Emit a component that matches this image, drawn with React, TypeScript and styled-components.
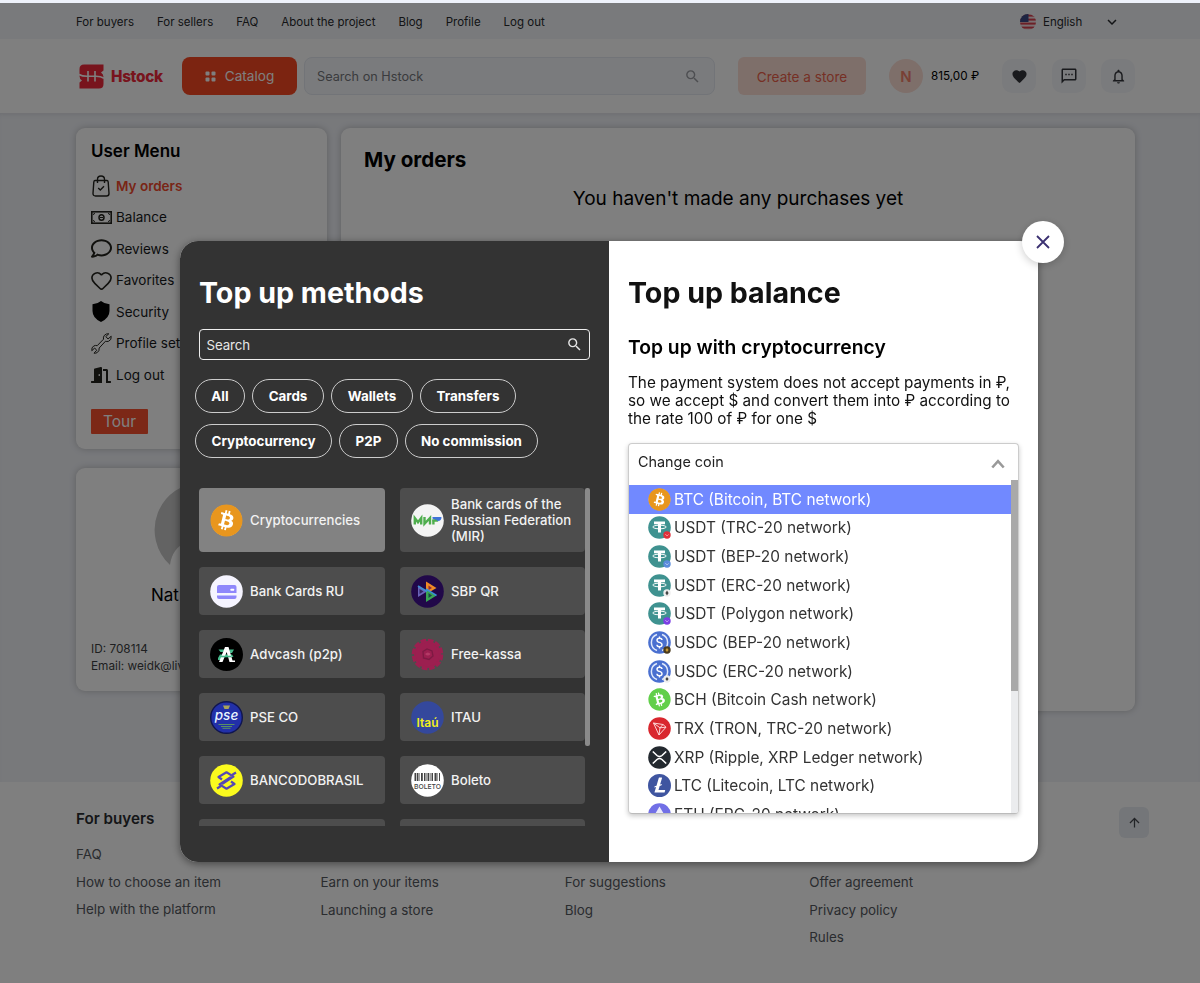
import React from "react";
import styled, { createGlobalStyle } from "styled-components";
import { FaBitcoin, FaRegComment, FaDoorOpen } from "react-icons/fa";
import { Heart } from "lucide-react";
import {
  MdSearch,
  MdFavorite,
  MdOutlineSms,
  MdNotificationsNone,
  MdKeyboardArrowDown,
  MdArrowUpward,
} from "react-icons/md";
import { SiLitecoin } from "react-icons/si";

const GlobalStyle = createGlobalStyle`
  * { box-sizing: border-box; }
  body {
    margin: 0;
    font-family: Inter, "Liberation Sans", sans-serif;
    color: #000;
    background: #fff;
    overflow: hidden;
  }
  h1, h2, h3, p, ul { margin: 0; padding: 0; }
  ul { list-style: none; }
  button { font-family: inherit; border: 0; padding: 0; margin: 0; }
  svg { display: block; flex: none; }
`;

/* ---------- page ---------- */

const Page = styled.div`
  height: 983px;
  display: flex;
  flex-direction: column;
  border-top: 3px solid #eef2fb;
  overflow: hidden;
`;

const TopBar = styled.nav`
  height: 36px;
  flex: none;
  display: flex;
  align-items: center;
  gap: 23px;
  padding: 1px 79px 0 76px;
  background: #f3f5f8;
  font-size: 11.5px;
  color: #26282c;
`;

const TopLink = styled.a`
  white-space: nowrap;
`;

const Language = styled.div`
  margin-left: auto;
  width: 101px;
  display: flex;
  align-items: center;
  gap: 7px;

  svg:last-child {
    margin-left: auto;
  }
`;

const Header = styled.header`
  height: 74px;
  flex: none;
  display: flex;
  align-items: center;
  padding: 0 65px 0 79px;
  background: #fff;
`;

const Logo = styled.div`
  width: 103px;
  display: flex;
  align-items: center;
  gap: 7px;
  color: #f0283a;
  font-size: 15.3px;
  font-weight: 800;
  letter-spacing: -0.3px;
`;

const CatalogButton = styled.button`
  width: 115px;
  height: 38px;
  border-radius: 8px;
  background: #f94822;
  color: #fff;
  font-size: 13.6px;
  display: flex;
  align-items: center;
  justify-content: center;
  gap: 9px;
`;

const SiteSearch = styled.div`
  width: 411px;
  height: 38px;
  margin-left: 7px;
  padding: 0 13px 0 12px;
  border: 1px solid #e4e8f0;
  border-radius: 8px;
  background: #f5f7fb;
  color: #75777c;
  font-size: 12.7px;
  display: flex;
  align-items: center;
  justify-content: space-between;
`;

const StoreButton = styled.button`
  width: 128px;
  height: 38px;
  margin-left: 23px;
  padding-top: 1px;
  border-radius: 6px;
  background: #fcded5;
  color: #ec5f4a;
  font-size: 13.6px;
`;

const Avatar = styled.div`
  width: 34px;
  height: 34px;
  margin-left: 23px;
  border-radius: 50%;
  background: #fcded5;
  color: #f2806a;
  font-size: 15px;
  font-weight: 600;
  display: flex;
  align-items: center;
  justify-content: center;
`;

const Amount = styled.span`
  width: 79px;
  padding-left: 8px;
  font-size: 11.7px;
  white-space: nowrap;
`;

const RoundTools = styled.div`
  display: flex;
  gap: 15.5px;
`;

const ToolButton = styled.button`
  width: 34px;
  height: 34px;
  border-radius: 10px;
  background: #f5f6fa;
  color: #33353a;
  display: flex;
  align-items: center;
  justify-content: center;
`;

const Main = styled.main`
  height: 669px;
  flex: none;
  display: flex;
  align-items: flex-start;
  gap: 14px;
  padding: 15px 65px 0 76px;
  background: #f0f2f7;
  box-shadow: inset 0 4px 5px -3px rgba(60, 60, 70, 0.12);
`;

const Sidebar = styled.aside`
  width: 251px;
  flex: none;
  display: flex;
  flex-direction: column;
  gap: 19px;
`;

const Card = styled.section`
  border-radius: 9px;
  background: #fff;
  box-shadow: 0 0 7px rgba(0, 0, 0, 0.22);
`;

const MenuCard = styled(Card)`
  height: 321px;
  padding: 11px 15px 0;
`;

const MenuTitle = styled.h3`
  font-size: 17px;
  line-height: 24px;
  font-weight: 600;
`;

const MenuList = styled.ul`
  margin-top: 7px;
`;

const MenuItem = styled.li<{ $active?: boolean }>`
  height: 31.5px;
  display: flex;
  align-items: center;
  gap: 5px;
  font-size: 13.5px;
  font-weight: ${(p) => (p.$active ? 600 : 400)};
  color: ${(p) => (p.$active ? "#f24a2c" : "#16181a")};
  white-space: nowrap;
`;

const MenuIcon = styled.span`
  width: 20px;
  display: flex;
  justify-content: center;
  color: #22221c;
`;

const TourButton = styled.button`
  width: 57px;
  height: 25px;
  margin-top: 18px;
  border-radius: 1px;
  background: #f8502e;
  color: #fff;
  font-size: 15.5px;
`;

const ProfileCard = styled(Card)`
  height: 223px;
  padding: 14px 15px 0;
  font-size: 11.8px;
  line-height: 17.4px;
  color: #3c3e42;
`;

const ProfilePhoto = styled.div`
  display: flex;
  justify-content: center;
`;

const ProfileName = styled.div`
  margin: 2px 0 31px 60px;
  font-size: 17px;
  line-height: 30px;
  color: #000;
`;

const OrdersCard = styled(Card)`
  width: 794px;
  height: 583px;
  padding: 18px 23px;
`;

const OrdersTitle = styled.h2`
  font-size: 20.6px;
  line-height: 28px;
  font-weight: 700;
`;

const OrdersEmpty = styled.p`
  margin-top: 12px;
  text-align: center;
  font-size: 19px;
  line-height: 26px;
`;

const Footer = styled.footer`
  flex: 1;
  display: flex;
  padding: 25px 51px 0 76px;
  background: #fff;
`;

const FooterColumn = styled.div<{ $offset?: boolean }>`
  width: 244.4px;
  padding-top: ${(p) => (p.$offset ? "62px" : "0")};
  font-size: 13.4px;
  line-height: 27.7px;
  color: #54585e;
`;

const FooterHeading = styled.h3`
  margin-bottom: 10px;
  font-size: 15.2px;
  line-height: 24px;
  font-weight: 600;
  color: #2a2c30;
`;

const UpButton = styled.button`
  width: 30px;
  height: 31px;
  margin-left: auto;
  border-radius: 6px;
  background: #e9edf2;
  color: #44484e;
  display: flex;
  align-items: center;
  justify-content: center;
`;

/* ---------- dialog ---------- */

const Overlay = styled.div`
  position: fixed;
  inset: 3px 0 0 0;
  padding: 238px 0 0 180px;
  background: rgba(0, 0, 0, 0.5);
`;

const Dialog = styled.div`
  position: relative;
  width: 858px;
  height: 621px;
  display: flex;
  border-radius: 18px;
  background: #fff;
  box-shadow: 0 2px 8px rgba(0, 0, 0, 0.45);
`;

const CloseButton = styled.button`
  position: absolute;
  top: -20.5px;
  right: -26px;
  width: 42px;
  height: 42px;
  border-radius: 50%;
  background: #fff;
  box-shadow: 0 2px 8px rgba(0, 0, 0, 0.2);
  display: flex;
  align-items: center;
  justify-content: center;
`;

const MethodsPane = styled.div`
  width: 429px;
  padding: 34px 19px 0;
  border-radius: 18px 0 0 18px;
  background: #333;
  color: #fff;
`;

const BalancePane = styled.div`
  width: 429px;
  padding: 34px 19px 0;
`;

const PaneTitle = styled.h1<{ $dark?: boolean }>`
  font-size: 28.6px;
  line-height: 36px;
  font-weight: 700;
  white-space: nowrap;
  color: ${(p) => (p.$dark ? "#111" : "#fff")};
`;

const MethodSearch = styled.div`
  height: 31px;
  margin-top: 18px;
  padding: 0 6px 0 6.5px;
  border: 1px solid #eee;
  border-radius: 4px;
  font-size: 13.3px;
  letter-spacing: -0.1px;
  display: flex;
  align-items: center;
  justify-content: space-between;
  color: #e6e6e6;
`;

const Chips = styled.div`
  margin: 19px -4px 0;
  display: flex;
  flex-wrap: wrap;
  gap: 11px 7px;
`;

const Chip = styled.button<{ $width: number }>`
  width: ${(p) => p.$width}px;
  height: 34px;
  border: 1px solid #ccc;
  border-radius: 17px;
  background: transparent;
  color: #fff;
  font-size: 13.4px;
  font-weight: 700;
  white-space: nowrap;
`;

const MethodArea = styled.div`
  height: 338px;
  margin-top: 30px;
  display: flex;
  overflow: hidden;
`;

const MethodGrid = styled.div`
  width: 386px;
  display: grid;
  grid-template-columns: 186px 185px;
  grid-template-rows: 64px;
  grid-auto-rows: 48px;
  gap: 15px;
`;

const MethodCard = styled.button<{ $active?: boolean }>`
  display: flex;
  align-items: center;
  gap: 7px;
  padding: 0 6px 0 11px;
  border-radius: 4px;
  background: ${(p) => (p.$active ? "#828282" : "#4d4d4d")};
  color: #f2f2f2;
  font-size: 13.2px;
  line-height: 16px;
  font-weight: 500;
  text-align: left;
`;

const ScrollThumb = styled.div<{ $w: number; $h: number; $c: string }>`
  width: ${(p) => p.$w}px;
  height: ${(p) => p.$h}px;
  border-radius: ${(p) => (p.$w < 6 ? 2 : 0)}px;
  background: ${(p) => p.$c};
`;

const SubTitle = styled.h2`
  margin-top: 23px;
  font-size: 19.3px;
  line-height: 26px;
  font-weight: 600;
  white-space: nowrap;
`;

const Note = styled.p`
  margin-top: 14px;
  font-size: 15.28px;
  line-height: 18px;
  white-space: nowrap;
  color: #111;
`;

const CoinSelect = styled.div`
  width: 391px;
  height: 371px;
  margin-top: 15px;
  border: 1px solid #ccc;
  border-bottom-color: #bbb;
  border-radius: 4px;
  overflow: hidden;
  box-shadow: 0 2px 5px rgba(0, 0, 0, 0.22);
`;

const SelectHead = styled.div`
  height: 36px;
  padding: 0 13px 1px 9px;
  display: flex;
  align-items: center;
  justify-content: space-between;
  font-size: 14.4px;
  color: #222;

  svg {
    margin-top: 5px;
  }
`;

const SelectBody = styled.div`
  display: flex;
  height: 333px;
  overflow: hidden;
`;

const CoinList = styled.ul`
  width: 383px;
  padding-top: 5px;
`;

const CoinRow = styled.li<{ $active?: boolean }>`
  height: 28.65px;
  padding-left: 19px;
  display: flex;
  align-items: center;
  gap: 3px;
  font-size: 15.4px;
  white-space: nowrap;
  background: ${(p) => (p.$active ? "#7189ff" : "transparent")};
  color: ${(p) => (p.$active ? "#fff" : "#333")};
`;

const ScrollTrack = styled.div`
  width: 7px;
  background: #ebecee;
`;

/* ---------- drawings ---------- */

const Flag = () => (
  <svg width="16" height="16" viewBox="0 0 16 16">
    <clipPath id="flag">
      <circle cx="8" cy="8" r="8" />
    </clipPath>
    <g clipPath="url(#flag)">
      <rect width="16" height="16" fill="#f3dfe2" />
      {[0, 4, 8, 12].map((y) => (
        <rect key={y} y={y + 0.6} width="16" height="2" fill="#d8404e" />
      ))}
      <rect width="8.5" height="8" fill="#3c4a86" />
    </g>
  </svg>
);

const LogoMark = () => (
  <svg width="25" height="25" viewBox="0 0 25 25">
    <path
      fill="#f0283a"
      d="M5 0.5H24.5V6.5L22 8.500Q24.500 10 24.500 13V20Q24.500 24.500 20 24.500H0.500V18.500L3 16.500Q0.500 15 0.500 12V5Q0.500 0.500 5 0.500Z"
    />
    <g fill="none" stroke="#fff" strokeWidth="1.600">
      <path d="M0 10.500Q3 12.300 8 12.300H17Q22 12.300 25 14.300M9 7V17.500M16 7V17.500" />
    </g>
  </svg>
);

const CatalogDots = () => (
  <svg width="11" height="11" viewBox="0 0 11 11" fill="#fff">
    <rect x="0.500" y="0.500" width="4" height="4" rx="1" />
    <rect x="6.500" y="0.500" width="4" height="4" rx="1" />
    <rect x="0.500" y="6.500" width="4" height="4" rx="1" />
    <rect x="6.500" y="6.500" width="4" height="4" rx="1" />
  </svg>
);

const BagIcon = () => (
  <svg width="18" height="22" viewBox="0 0 18 22" fill="none" stroke="currentColor" strokeWidth="1.400">
    <path d="M3 5.500H15Q16 5.500 16.200 7L17 18.500Q17 21 14.500 21H3.500Q1 21 1 18.500L1.800 7Q2 5.500 3 5.500Z" />
    <path d="M5.500 8V4.500Q5.500 1 9 1T12.500 4.500V8" />
    <path d="M6.200 13L8.300 15L12 11.300" />
  </svg>
);

const CashIcon = () => (
  <svg width="21" height="13" viewBox="0 0 21 13" fill="none" stroke="currentColor">
    <rect x="0.800" y="0.800" width="19.400" height="11.400" strokeWidth="1.600" />
    <path d="M2 3.500Q3.500 3.500 3.500 2M17.500 2Q17.500 3.500 19 3.500M2 9.500Q3.500 9.500 3.500 11M17.500 11Q17.500 9.500 19 9.500" strokeWidth="1" />
    <ellipse cx="10.500" cy="6.500" rx="2.500" ry="2.800" strokeWidth="1.500" />
    <path d="M9 6.500H12" strokeWidth="1" />
  </svg>
);

const ShieldIcon = () => (
  <svg width="18" height="21" viewBox="0 0 18 21" fill="#000">
    <path d="M9 0Q12.500 3 17.500 3.300V10Q17.500 17 9 21Q0.500 17 0.500 10V3.300Q5.500 3 9 0Z" />
  </svg>
);

const WrenchIcon = () => (
  <svg width="21" height="21" viewBox="0 0 21 21" fill="none" stroke="currentColor" strokeWidth="1">
    <path d="M17.800 0.800L14.800 3.500L17 6L20.200 3.200Q20.800 7 17.500 8.300Q15.800 8.800 14.500 8.200L8.200 15Q8.500 18 6.300 19.500Q4.800 20.500 3 20.200L5.700 17.300L3.700 15L0.800 17.700Q0.300 14.500 2.700 13Q4.300 12 6.200 12.700L12.500 6.200Q11.900 4 13.500 2.200Q15.300 0.400 17.800 0.800Z" />
  </svg>
);

const PhotoPlaceholder = () => (
  <svg width="96" height="96" viewBox="0 0 96 96">
    <path d="M48 0.500A47.500 47.500 0 0 0 16 83Q18 66 34 59Q48 54 62 59Q78 66 80 83A47.500 47.500 0 0 0 48 0.500Z" fill="#c6c6c6" />
  </svg>
);

const CloseIcon = () => (
  <svg width="14" height="14" viewBox="0 0 14 14" fill="none" stroke="#3b3171" strokeWidth="1.800">
    <path d="M1 1L13 13M13 1L1 13" />
  </svg>
);

const ChevronUp = () => (
  <svg width="14" height="10" viewBox="0 0 14 10" fill="none" stroke="#999" strokeWidth="2.600">
    <path d="M1.300 8.500L7 2.200L12.700 8.500" />
  </svg>
);

const BitcoinDisc = ({ size, color, tilt = 0 }: { size: number; color: string; tilt?: number }) => (
  <svg width={size} height={size} viewBox="0 0 32 32">
    <circle cx="16" cy="16" r="15" fill="#fff" />
    <g transform={`rotate(${tilt} 16 16)`}>
      <FaBitcoin x="0" y="0" size={32} color={color} />
    </g>
  </svg>
);

const discText = { fontFamily: "Inter, sans-serif", textAnchor: "middle" as const };

const MirDisc = () => (
  <svg width="33" height="33" viewBox="0 0 33 33">
    <circle cx="16.500" cy="16.500" r="16.300" fill="#f4f4f4" />
    <g fill="none" stroke="#4fae4e" strokeWidth="2.400">
      <path d="M3.800 20.500V14L7 18.300L10.200 14V20.500" />
      <path d="M13.500 13V19.800L19 14V20.500" />
      <path d="M22.400 20.500V15.500" />
    </g>
    <path d="M21.500 13H30.500Q30.500 16.800 27 17H25.500L21.500 14.500Z" fill="#3f73d8" />
    <path d="M21.500 15.500H25L27.500 17.800H21.500Z" fill="#4fae4e" />
  </svg>
);

const CardDisc = () => (
  <svg width="33" height="33" viewBox="0 0 33 33">
    <circle cx="16.500" cy="16.500" r="16.300" fill="#f5f4ff" />
    <path d="M9 10H24.500Q26.500 10 26.500 12V18H7V12Q7 10 9 10Z" fill="#8f87fb" />
    <path d="M7 20.500H26.500V22Q26.500 24 24.500 24H9Q7 24 7 22Z" fill="#8f87fb" />
    <rect x="20.500" y="13.700" width="3.600" height="2" rx="0.500" fill="#fff" />
  </svg>
);

const SbpDisc = () => (
  <svg width="33" height="33" viewBox="0 0 33 33">
    <circle cx="16.500" cy="16.500" r="16.300" fill="#210849" />
    <path d="M7 11L16 16.500L7 22Z" fill="#6a62b8" />
    <path d="M8.500 14L12.500 16.500L8.500 19Z" fill="#2f2460" />
    <path d="M15 6.500L25.500 13L15 19Z" fill="#f08a24" />
    <path d="M17.500 10.500L21 13L17.500 15Z" fill="#8c2b3e" />
    <path d="M15 14L25.500 20.500L15 27Z" fill="#3aa655" />
    <path d="M17.500 18L21 20.500L17.500 23Z" fill="#1b4a48" />
    <path d="M15 14L20.500 17.300L25.500 20.500" stroke="#3a8fd8" strokeWidth="1.500" fill="none" />
    <path d="M7 11L16 16.500" stroke="#3e8fd0" strokeWidth="1.800" />
  </svg>
);

const AdvDisc = () => (
  <svg width="33" height="33" viewBox="0 0 33 33">
    <circle cx="16.500" cy="16.500" r="16.500" fill="#000" />
    <path d="M8.500 11.500H15L13 14H10.500ZM19.500 11.500H24L22 15H18.500ZM8 20L10 16.500H22L23.500 19H12L11 22H8Z" fill="#45b98b" />
    <path d="M9 24L15 9H18.500L22.500 22.500H25V24H19.500L16.700 14L12.500 24Z" fill="#fff" />
    <path d="M11 18.500H21" stroke="#45b98b" strokeWidth="1.600" />
  </svg>
);

const KassaDisc = () => (
  <svg width="33" height="33" viewBox="0 0 33 33">
    <circle cx="16.500" cy="16.500" r="13.500" fill="#9c1f50" />
    <circle cx="16.500" cy="16.500" r="13.800" fill="none" stroke="#9c1f50" strokeWidth="4" strokeDasharray="5.500 1.720" />
    <path
      d="M12 13.500L16 11L21 13L22 18L18 21.500L12.500 20Z"
      fill="none"
      stroke="#7d1a43"
      strokeWidth="1.300"
    />
    <path d="M14 16Q17 13 19.500 16Q17 19 14 16Z" fill="#b43a66" />
  </svg>
);

const PseDisc = () => (
  <svg width="33" height="33" viewBox="0 0 33 33">
    <circle cx="16.500" cy="16.500" r="15.800" fill="#2230a8" stroke="#10154f" strokeWidth="1.400" />
    <path d="M13 4.500H20L18.500 8H14.500Z" fill="#a9a35a" />
    <text x="16.500" y="19" fontSize="13.500" fontStyle="italic" fontWeight="500" fill="#eaf6ff" {...discText}>
      pse
    </text>
    <path d="M8.500 23.500H24.500M11 25.500H22M12.500 27.300H20.500" stroke="#5f9a5e" strokeWidth="0.900" />
  </svg>
);

const ItauDisc = () => (
  <svg width="33" height="33" viewBox="0 0 33 33">
    <circle cx="16.500" cy="16.500" r="16.300" fill="#34489c" />
    <text x="16.500" y="26" fontSize="12" fontWeight="600" fill="#f3f01c" {...discText}>
      Itaú
    </text>
  </svg>
);

const BrasilDisc = () => (
  <svg width="33" height="33" viewBox="0 0 33 33">
    <circle cx="16.500" cy="16.500" r="16.300" fill="#fbfb1e" />
    <g fill="none" stroke="#5648b4" strokeWidth="2.200" strokeLinejoin="round">
      <path d="M12 15.500L8.500 13L16.500 8.300L23.500 12.600L12 20" />
      <path d="M21 17.500L24.500 20L16.500 24.700L9.500 20.400L21 13" />
      <path d="M22 11L26 8.500M11 22L7 24.500" />
    </g>
  </svg>
);

const BoletoDisc = () => (
  <svg width="33" height="33" viewBox="0 0 33 33">
    <circle cx="16.500" cy="16.500" r="16.300" fill="#fff" />
    {[3.5, 6, 7.5, 10, 13, 14.5, 16.5, 19.5, 21, 23.5, 25.5, 28].map((x, i) => (
      <rect key={x} x={x} y="9" width={i % 3 === 0 ? 1.8 : 1} height="8" fill="#444" />
    ))}
    <text x="16.500" y="24.500" fontSize="6.800" fontWeight="500" fill="#444" {...discText}>
      BOLETO
    </text>
  </svg>
);

const TetherDisc = ({ badge }: { badge: string }) => (
  <svg width="23" height="23" viewBox="0 0 23 23">
    <circle cx="11.500" cy="11.500" r="11.300" fill="#3f9290" />
    <path d="M6 5.500H17V8.300H13V16.500H10V8.300H6Z" fill="#fff" />
    <ellipse cx="11.500" cy="11" rx="6.700" ry="1.800" fill="none" stroke="#fff" strokeWidth="1" />
    <circle cx="19" cy="19" r="3.700" fill={badge} />
    {badge === "#eeeeee" && <path d="M19 16.500L20.600 19L19 21.500L17.400 19Z" fill="#444" />}
    {badge !== "#eeeeee" && <path d="M17.300 18L19 20L20.700 18.400" stroke="#fff" strokeOpacity="0.450" fill="none" />}
  </svg>
);

const UsdcDisc = ({ badge }: { badge: string }) => (
  <svg width="23" height="23" viewBox="0 0 23 23">
    <circle cx="11.500" cy="11.500" r="11.300" fill="#4a70d0" />
    <path
      d="M9 3.500A8.500 8.500 0 0 0 9 19.500M14 3.500A8.500 8.500 0 0 1 14 19.500"
      fill="none"
      stroke="#dfe8fb"
      strokeWidth="1.500"
    />
    <path
      d="M14 9Q14 7.200 11.500 7.200T9 9.200Q9 10.800 11.500 11.400T14 13.800Q14 15.700 11.500 15.700T9 13.800M11.500 5.500V7.200M11.500 15.700V17.500"
      fill="none"
      stroke="#fff"
      strokeWidth="1.400"
    />
    <circle cx="19" cy="19" r="3.700" fill={badge} />
    <path
      d="M19 17L20.600 19L19 21L17.400 19Z"
      fill={badge === "#eeeeee" ? "#444" : "#c79a34"}
    />
  </svg>
);

const TronDisc = () => (
  <svg width="23" height="23" viewBox="0 0 23 23">
    <circle cx="11.500" cy="11.500" r="11.300" fill="#d9272e" />
    <g fill="none" stroke="#ffe4e4" strokeWidth="0.900" strokeLinejoin="round">
      <path d="M5.500 6L15 7.500L18 10.200L11 18Z" />
      <path d="M5.500 6L12 10.800L18 10.200M12 10.800L15 7.500M12 10.800L11 18" />
    </g>
  </svg>
);

const XrpDisc = () => (
  <svg width="23" height="23" viewBox="0 0 23 23">
    <circle cx="11.500" cy="11.500" r="11.300" fill="#23292f" />
    <path
      d="M4.800 5.500L9 9.500Q11.500 11.500 14 9.500L18.200 5.500M4.800 17.500L9 13.500Q11.500 11.500 14 13.500L18.200 17.500"
      fill="none"
      stroke="#fff"
      strokeWidth="1.600"
    />
  </svg>
);

const LitecoinDisc = () => (
  <svg width="23" height="23" viewBox="0 0 23 23">
    <circle cx="11.500" cy="11.500" r="10.500" fill="#fff" />
    <SiLitecoin x="0" y="0" size={23} color="#3f55a0" />
  </svg>
);

const EthDisc = () => (
  <svg width="23" height="23" viewBox="0 0 23 23">
    <circle cx="11.500" cy="11.500" r="11.300" fill="#716fe6" />
    <path d="M11.500 3.500L16.500 12L11.500 15L6.500 12Z" fill="#fff" fillOpacity="0.850" />
    <path d="M11.500 16.500L16 13.500L11.500 20L7 13.500Z" fill="#fff" />
  </svg>
);

/* ---------- data ---------- */

const topLinks = ["For buyers", "For sellers", "FAQ", "About the project", "Blog", "Profile", "Log out"];

const menu = [
  { label: "My orders", icon: <BagIcon />, active: true },
  { label: "Balance", icon: <CashIcon /> },
  { label: "Reviews", icon: <FaRegComment size={21} /> },
  { label: "Favorites", icon: <Heart size={23} strokeWidth={1.7} /> },
  { label: "Security", icon: <ShieldIcon /> },
  { label: "Profile settings", icon: <WrenchIcon /> },
  { label: "Log out", icon: <FaDoorOpen size={20} /> },
];

const chips: [string, number][] = [
  ["All", 50],
  ["Cards", 72],
  ["Wallets", 82],
  ["Transfers", 96],
  ["Cryptocurrency", 137],
  ["P2P", 59],
  ["No commission", 133],
];

const methods = [
  { label: "Cryptocurrencies", icon: <BitcoinDisc size={33} color="#e8961e" />, active: true },
  { label: "Bank cards of the Russian Federation (MIR)", icon: <MirDisc /> },
  { label: "Bank Cards RU", icon: <CardDisc /> },
  { label: "SBP QR", icon: <SbpDisc /> },
  { label: "Advcash (p2p)", icon: <AdvDisc /> },
  { label: "Free-kassa", icon: <KassaDisc /> },
  { label: "PSE CO", icon: <PseDisc /> },
  { label: "ITAU", icon: <ItauDisc /> },
  { label: "BANCODOBRASIL", icon: <BrasilDisc /> },
  { label: "Boleto", icon: <BoletoDisc /> },
  { label: "", icon: null },
  { label: "", icon: null },
];

const coins = [
  { label: "BTC (Bitcoin, BTC network)", icon: <BitcoinDisc size={23} color="#e8961e" />, active: true },
  { label: "USDT (TRC-20 network)", icon: <TetherDisc badge="#e0303a" /> },
  { label: "USDT (BEP-20 network)", icon: <TetherDisc badge="#5a8bdc" /> },
  { label: "USDT (ERC-20 network)", icon: <TetherDisc badge="#eeeeee" /> },
  { label: "USDT (Polygon network)", icon: <TetherDisc badge="#7b3fe4" /> },
  { label: "USDC (BEP-20 network)", icon: <UsdcDisc badge="#4a3a1c" /> },
  { label: "USDC (ERC-20 network)", icon: <UsdcDisc badge="#eeeeee" /> },
  { label: "BCH (Bitcoin Cash network)", icon: <BitcoinDisc size={23} color="#62cf4a" tilt={-28} /> },
  { label: "TRX (TRON, TRC-20 network)", icon: <TronDisc /> },
  { label: "XRP (Ripple, XRP Ledger network)", icon: <XrpDisc /> },
  { label: "LTC (Litecoin, LTC network)", icon: <LitecoinDisc /> },
  { label: "ETH (ERC-20 network)", icon: <EthDisc /> },
];

export default function App() {
  return (
    <>
      <GlobalStyle />
      <Page>
        <TopBar>
          {topLinks.map((label) => (
            <TopLink key={label}>{label}</TopLink>
          ))}
          <Language>
            <Flag />
            <span>English</span>
            <MdKeyboardArrowDown size={18} />
          </Language>
        </TopBar>

        <Header>
          <Logo>
            <LogoMark />
            Hstock
          </Logo>
          <CatalogButton>
            <CatalogDots />
            Catalog
          </CatalogButton>
          <SiteSearch>
            Search on Hstock
            <MdSearch size={17} color="#9a9ca2" />
          </SiteSearch>
          <StoreButton>Create a store</StoreButton>
          <Avatar>N</Avatar>
          <Amount>815,00 ₽</Amount>
          <RoundTools>
            <ToolButton>
              <MdFavorite size={17} />
            </ToolButton>
            <ToolButton>
              <MdOutlineSms size={18} />
            </ToolButton>
            <ToolButton>
              <MdNotificationsNone size={17} />
            </ToolButton>
          </RoundTools>
        </Header>

        <Main>
          <Sidebar>
            <MenuCard>
              <MenuTitle>User Menu</MenuTitle>
              <MenuList>
                {menu.map((item) => (
                  <MenuItem key={item.label} $active={item.active}>
                    <MenuIcon>{item.icon}</MenuIcon>
                    {item.label}
                  </MenuItem>
                ))}
              </MenuList>
              <TourButton>Tour</TourButton>
            </MenuCard>
            <ProfileCard>
              <ProfilePhoto>
                <PhotoPlaceholder />
              </ProfilePhoto>
              <ProfileName>Nat</ProfileName>
              <div>ID: 708114</div>
              <div>Email: weidk@liv</div>
            </ProfileCard>
          </Sidebar>
          <OrdersCard>
            <OrdersTitle>My orders</OrdersTitle>
            <OrdersEmpty>You haven't made any purchases yet</OrdersEmpty>
          </OrdersCard>
        </Main>

        <Footer>
          <FooterColumn>
            <FooterHeading>For buyers</FooterHeading>
            <div>FAQ</div>
            <div>How to choose an item</div>
            <div>Help with the platform</div>
          </FooterColumn>
          <FooterColumn $offset>
            <div>Earn on your items</div>
            <div>Launching a store</div>
          </FooterColumn>
          <FooterColumn $offset>
            <div>For suggestions</div>
            <div>Blog</div>
          </FooterColumn>
          <FooterColumn $offset>
            <div>Offer agreement</div>
            <div>Privacy policy</div>
            <div>Rules</div>
          </FooterColumn>
          <UpButton>
            <MdArrowUpward size={15} />
          </UpButton>
        </Footer>
      </Page>

      <Overlay>
        <Dialog>
          <MethodsPane>
            <PaneTitle>Top up methods</PaneTitle>
            <MethodSearch>
              Search
              <MdSearch size={17} />
            </MethodSearch>
            <Chips>
              {chips.map(([label, width]) => (
                <Chip key={label} $width={width}>
                  {label}
                </Chip>
              ))}
            </Chips>
            <MethodArea>
              <MethodGrid>
                {methods.map((m, i) => (
                  <MethodCard key={i} $active={m.active}>
                    {m.icon}
                    {m.label}
                  </MethodCard>
                ))}
              </MethodGrid>
              <ScrollThumb $w={5} $h={258} $c="#8a8a8a" />
            </MethodArea>
          </MethodsPane>
          <BalancePane>
            <PaneTitle $dark>Top up balance</PaneTitle>
            <SubTitle>Top up with cryptocurrency</SubTitle>
            <Note>
              The payment system does not accept payments in ₽,
              <br />
              so we accept $ and convert them into ₽ according to
              <br />
              the rate 100 of ₽ for one $
            </Note>
            <CoinSelect>
              <SelectHead>
                Change coin
                <ChevronUp />
              </SelectHead>
              <SelectBody>
                <CoinList>
                  {coins.map((c) => (
                    <CoinRow key={c.label} $active={c.active}>
                      {c.icon}
                      {c.label}
                    </CoinRow>
                  ))}
                </CoinList>
                <ScrollTrack>
                  <ScrollThumb $w={7} $h={211} $c="#a9a9a9" />
                </ScrollTrack>
              </SelectBody>
            </CoinSelect>
          </BalancePane>
          <CloseButton>
            <CloseIcon />
          </CloseButton>
        </Dialog>
      </Overlay>
    </>
  );
}
